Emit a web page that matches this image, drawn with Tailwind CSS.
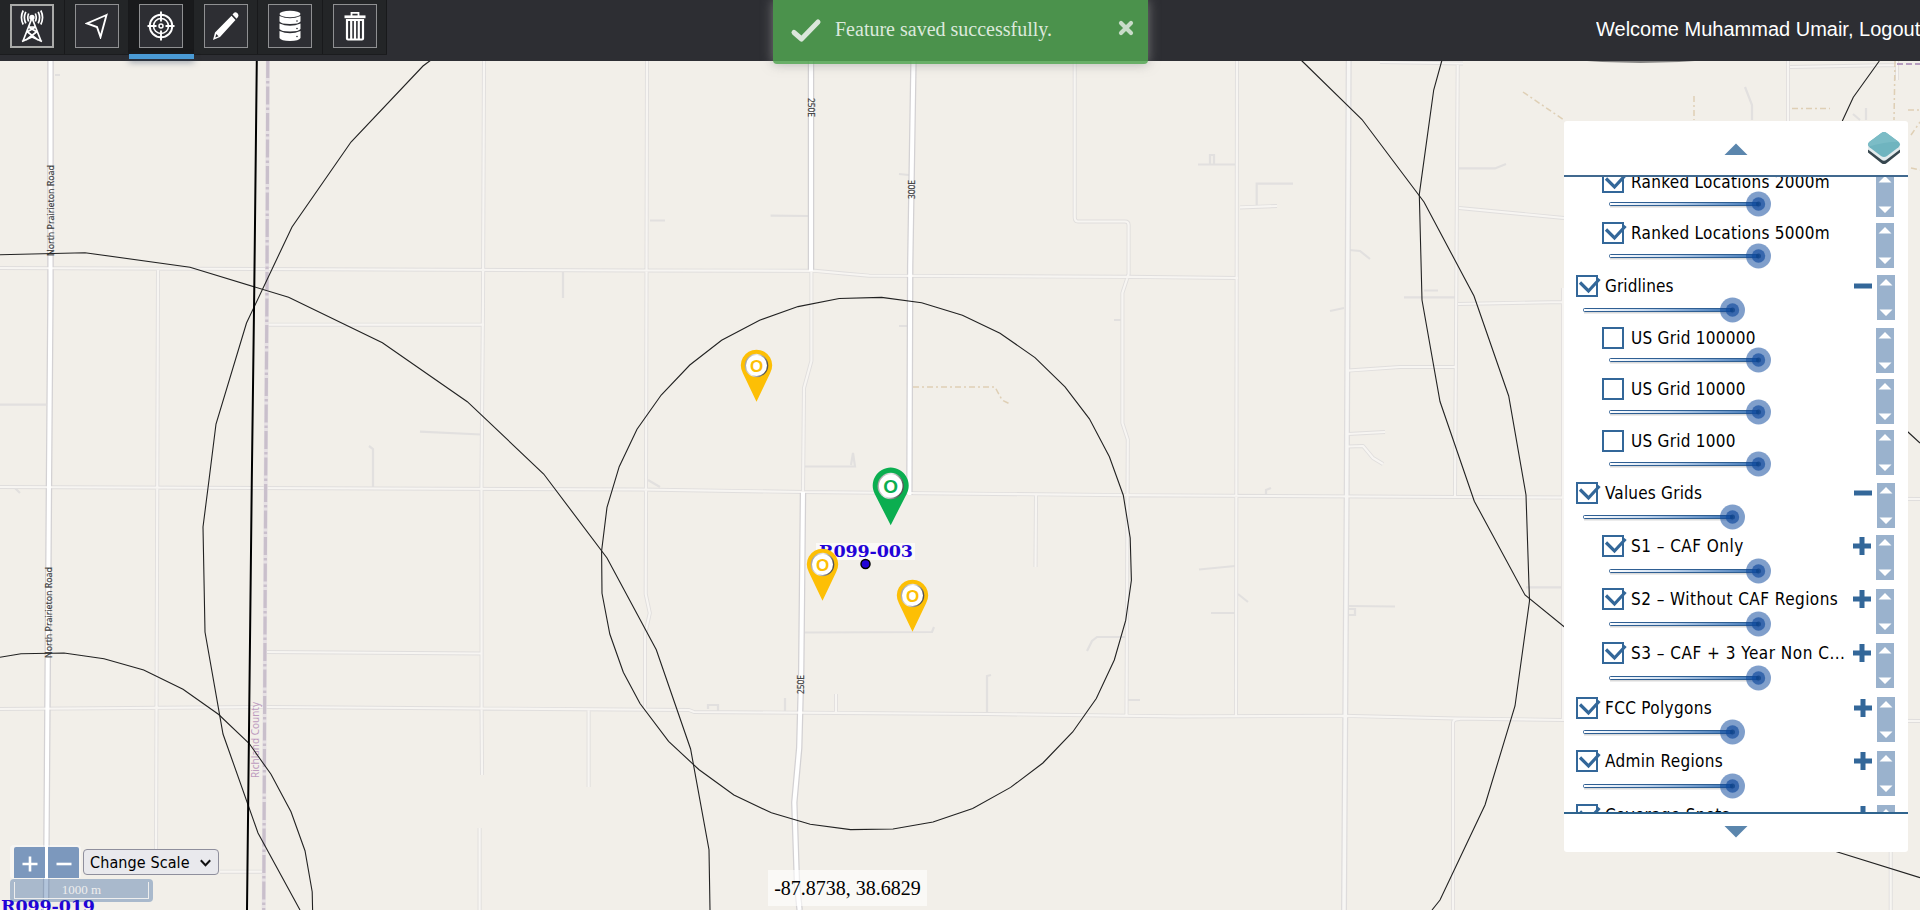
<!DOCTYPE html>
<html lang="en">
<head>
<meta charset="utf-8">
<title>Map viewer</title>
<script src="https://cdn.jsdelivr.net/npm/@tailwindcss/browser@4"></script>
</head>
<body class="relative h-[910px] w-[1920px] overflow-hidden bg-[#f2efe9] font-['Liberation_Sans',sans-serif]">

<!-- map canvas -->
<svg class="absolute inset-0" width="1920" height="910" viewBox="0 0 1920 910" fill="none">
  <defs>
    <g id="minor">
      <path d="M484 60L483 300L481.500 480L481.600 710L482 775M479.600 828V910M158 270L156 858M0 268L640 270.500L815 270.800L844 273.500L869 275.700L1126 276.800L1238 278M0 487L640 489.500L803 492L1126 495.200L1457 497L1920 499M0 709L268 707L480 708.500L689 710L694 712L987 714L1179 716.400L1343 715.800L1457 718.500L1564 720L1920 721M267 324.700H484M267 652L482 653.500M588.600 710V787M220 871.700H264M647 60L646 490L645.700 594L649.800 613L645 634.500V710M811.400 271V361L804 388L803 492M1074.700 60V217Q1074.700 221.500 1078 221.500H1125Q1128.600 221.500 1128.600 225V274L1122.400 293V423L1127.800 439.500L1126.500 714.700M1237 60L1236 716M1457.700 65L1455 496M1380 62L1463 63.500M1453 910V723Q1453 719 1460 719M1348 370.600L1400 367H1455M1459 208L1564 218M1458 304L1564 302M1563 288V720M1788 61V121M1790 67L1897 65M1897 61V80M1890.700 852V910M1240 207.400L1277 206M1348 434L1385 432M1348 446.500L1363 446L1373 458L1383 464M1036 495L1035.500 567M836 694V713"/>
    </g>
    <g id="mid"><path d="M1348.700 60L1346.700 493.600L1344 910"/></g>
    <g id="major"><path d="M50.500 60L50.500 290L49 480L46 910M811 60V271M913.500 60L910.200 266L909.400 495M803 492L801.200 672.500L799.200 748L794.300 802.500L797 884L799.600 910"/></g>
    <linearGradient id="disc" x1="0" y1="0" x2="1" y2="0.300"><stop offset="0" stop-color="#8a8a8a"/><stop offset="0.500" stop-color="#ededed"/><stop offset="1" stop-color="#555"/></linearGradient>
  </defs>
  <!-- driveways and tracks -->
  <path stroke="#e2e0df" stroke-width="2.200" d="M0 404.700H46M420 431.700L481 434.500M369 446L373 449V487M563 272V298M805 466.500H855L853 453L851 465M804.500 632.500L932 632L934 627M987 713V676L991 675M785 698V712M1087 651L1092 641L1097 637H1125M770.600 215.600L808 216M650 220.500H665M899 174L909 175M899 326H909M1199 569.500L1235 566M1211 613H1235M1238 594L1248 602M648 480L660 487M1198 164.500H1235M1210 164V155H1214V164M1256.700 205V183.600H1293M1349 250L1360 251L1370 259M1330 311L1344 308M1404 297.400H1455M1424 290.500H1438M1459 168.400H1495L1506 164M1349 606L1395 606.500M1345 609L1355 609V615H1345M1526 587.400H1564M1266 495V490L1271 488M1114 320H1122M708 709V705H718V711M1127 700H1140M1745 87L1752 105V120M1853 114L1860 120M1866 108V120M0 487L14 487L20 493M55 75H60"/>
  <g stroke-linejoin="round">
    <use href="#minor" stroke="#e0dedd" stroke-width="4"/>
    <use href="#mid" stroke="#dedcdc" stroke-width="6"/>
    <use href="#major" stroke="#d3d1d3" stroke-width="6.500"/>
    <use href="#minor" stroke="#f7f5f2" stroke-width="2.200"/>
    <use href="#mid" stroke="#f7f6f4" stroke-width="3.500"/>
    <use href="#major" stroke="#fff" stroke-width="4"/>
  </g>
  <path stroke="#d9c7a8" stroke-opacity=".8" stroke-width="1.500" stroke-dasharray="6 3 2 3" d="M913 387H995L1002 400L1010 404M1523 92L1564 120M1694 96V120M1792 108.500H1830M1895 61L1894 120M1908 110H1920M1911 135L1920 122M1911 168L1920 170"/>
  <path stroke="#b79ec0" stroke-width="2" stroke-dasharray="6 3" d="M1897 64H1920"/>
  <path stroke="#e6e0e4" stroke-width="4" d="M267.800 60L267 287L265.700 480L263.700 910"/>
  <path stroke="#c9bfcb" stroke-width="3.200" stroke-dasharray="18 3 2.500 3" d="M267.800 60L267 287L265.700 480L263.700 910"/>
  <path fill="#555" fill-opacity=".7" d="M1572 60Q1640 66 1710 60Z"/>
  <!-- road and county names -->
  <g font-family="Noto Sans, sans-serif" font-size="9" fill="#3c3c3c" stroke="#3c3c3c" stroke-width=".15">
    <text transform="translate(53.500 256) rotate(-90)" textLength="91" lengthAdjust="spacingAndGlyphs">North Prairieton Road</text>
    <text transform="translate(51.500 658) rotate(-90)" textLength="91" lengthAdjust="spacingAndGlyphs">North Prairieton Road</text>
    <text transform="translate(807.500 98) rotate(90)" textLength="19" lengthAdjust="spacingAndGlyphs">250E</text>
    <text transform="translate(914.500 199) rotate(-90)" textLength="19" lengthAdjust="spacingAndGlyphs">300E</text>
    <text transform="translate(804 694) rotate(-90)" textLength="19" lengthAdjust="spacingAndGlyphs">250E</text>
    <text transform="translate(258.500 778) rotate(-90)" textLength="76" font-size="10" fill="#bd9bbf" stroke="none">Richland County</text>
  </g>
  <!-- coverage outlines -->
  <g stroke="#222" stroke-width="1.100">
    <path d="M431 60L423 66L351 142L292 227L246.500 323L216 424L209 480L203 527L205 632L223 734L258 833L300 910M1301 60L1362 119.500L1424 202L1474 296L1508.700 396L1526 495L1529.500 601L1515 706L1485 805L1440 900L1432 910"/>
    <path d="M0 254.700L85 252.700L190 267.300L288.600 297.300L382.400 342.700L467.300 401.700L543.700 474L607 558L656.300 649.700L690.600 749L709 849.700L710 910"/>
    <path d="M0 657.300L21 653.700L64 653L104 658.700L143.700 670L183 689.300L218.400 714.300L249 743.300L271 774.300L291 811.700L305 850.700L312.200 891.700L312.600 910"/>
    <path d="M881.600 297.400L921.600 302.800L962.400 315.300L1000 333.200L1035 357.600L1065 386.800L1089.400 418.800L1109.400 456.700L1123.300 495.200L1130.200 538L1131.400 580.300L1125.700 620.400L1114.300 660L1096.300 698.500L1072.700 732L1042.900 763L1010.600 787.400L972.700 808.500L933 822L893 829L850.600 829.600L810.200 824.200L771.400 812.800L733.900 795L698.800 769.500L668.600 741.300L640 703.500L623.300 672.300L609.800 634L602 593.300L601.600 551L607 507.300L619.200 466.700L637 429.300L661.200 395L689.800 365L721.600 340.200L759.600 320.200L798 306.600L839.200 298.500Z"/>
    <path d="M1442 60L1433.700 90L1419.300 194.400L1422 300L1440 401.500L1474.300 501.200L1525 595L1605 660L1700 790L1836.700 851.700L1920 877.700M1879.300 61L1853.300 97.300L1842.300 121M1900 422L1908 432L1920 443"/>
  </g>
  <path stroke="#000" stroke-width="2" d="M256.800 60L254.300 287L251.800 480L247 910"/>
  <!-- site labels -->
  <rect x="816" y="543" width="99" height="17" fill="#fff" fill-opacity=".65"/>
  <g font-family="DejaVu Serif, serif" font-weight="700" font-size="17.500" fill="#2203d8">
    <text x="819" y="557" textLength="94">R099-003</text>
    <text x="1" y="912" textLength="94">R099-019</text>
  </g>
  <circle cx="865.500" cy="564" r="4.500" fill="#2203d8" stroke="#000" stroke-width="1.500"/>
  <!-- pins -->
  <g font-family="Liberation Sans, sans-serif" font-weight="700" font-size="17" text-anchor="middle">
    <g transform="translate(756.500 365)" fill="#fdbf05"><path d="M0 36.700L-13.600 8.200A15.700 15.700 0 1 1 13.600 8.200Z"/><circle cy=".5" r="11.800" fill="url(#disc)"/><circle cy=".5" r="10.500" fill="#fff"/><text y="6.600">O</text></g>
    <g transform="translate(822.500 564)" fill="#fdbf05"><path d="M0 36.700L-13.600 8.200A15.700 15.700 0 1 1 13.600 8.200Z"/><circle cy=".5" r="11.800" fill="url(#disc)"/><circle cy=".5" r="10.500" fill="#fff"/><text y="6.600">O</text></g>
    <g transform="translate(912.500 595)" fill="#fdbf05"><path d="M0 36.700L-13.600 8.200A15.700 15.700 0 1 1 13.600 8.200Z"/><circle cy=".5" r="11.800" fill="url(#disc)"/><circle cy=".5" r="10.500" fill="#fff"/><text y="6.600">O</text></g>
    <g transform="translate(890.700 485.500)" fill="#0bae50"><path d="M0 39.800L-15.800 8.700A18 18 0 1 1 15.800 8.700Z"/><circle cy=".5" r="13.200" fill="url(#disc)"/><circle cy=".5" r="11.800" fill="#fff"/><text y="7.200" font-size="19">O</text></g>
  </g>
</svg>

<!-- top bar -->
<header class="absolute inset-x-0 top-0 flex h-[61px] items-start justify-between bg-[#2d2e33]">
  <nav class="flex h-[55px] border-b border-[#1b1c1e] bg-[#232527]">
    <button class="flex w-[65px] items-start border-r border-[#18191b] pt-1 pl-[10px]">
      <span class="flex size-11 items-center justify-center border-2 border-[#a9aaa8] bg-[#2d2e33]">
        <svg width="24" height="34" viewBox="0 0 24 34" fill="none" stroke="#fff" stroke-width="1.700"><path d="M12 9L3 32M12 9L21 32M8.500 18L15.500 18M7 22.500L18 31M17 22.500L6 31M8.500 18L17 23M15.500 18L7 23M2 32.500L12 28L22 32.500"/><circle cx="12" cy="8.500" r="1.800" fill="#fff"/><path d="M8.700 4.500Q6.800 8.500 8.700 12.500M15.300 4.500Q17.200 8.500 15.300 12.500M5.800 2.800Q3 8.500 5.800 14.300M18.200 2.800Q21 8.500 18.200 14.300M3.200 1.500Q-.3 8.500 3.200 15.500M20.800 1.500Q24.300 8.500 20.800 15.500"/></svg>
      </span>
    </button>
    <button class="flex w-16 items-start border-r border-[#18191b] pt-1 pl-[10px]">
      <span class="flex size-11 items-center justify-center border border-[#8f9092] bg-[#2d2e33]">
        <svg width="24" height="26" viewBox="0 0 24 26" fill="none" stroke="#fff" stroke-width="1.900"><path d="M21.500 2L2 10.500L12 14L15.500 24Z"/></svg>
      </span>
    </button>
    <button class="relative flex w-[65px] items-start border-r border-[#18191b] bg-[#191a1c] pt-1 pl-[10px]">
      <span class="flex size-11 items-center justify-center border border-[#8f9092] bg-[#2d2e33]">
        <svg width="28" height="30" viewBox="0 0 28 30" fill="none" stroke="#fff" stroke-width="1.900"><circle cx="14" cy="15" r="11.300"/><circle cx="14" cy="15" r="7.500" stroke-width="1.600"/><circle cx="14" cy="15" r="2" stroke-width="1.500"/><path d="M14 0.500V10.500M14 19.500V29.500M.5 15H9.500M18.500 15H27.500"/></svg>
      </span>
      <span class="absolute top-[54px] left-0 h-[5px] w-[65px] bg-[#4a9ad4] shadow-[0_3px_6px_rgba(40,60,90,0.500)]"></span>
    </button>
    <button class="flex w-16 items-start border-r border-[#18191b] pt-1 pl-[10px]">
      <span class="flex size-11 items-center justify-center border border-[#8f9092] bg-[#2d2e33]">
        <svg width="28" height="30" viewBox="0 0 28 30" fill="#fff"><path d="M20.500 3.500L22 1.800Q23.500 .6 25.200 2L26 3Q27 4.500 26 6L24.500 7.800Z"/><path fill-rule="evenodd" d="M19.500 4.700L23.500 9L8 26L1 29L3 21.500ZM4.300 23L3.300 26.500L6.500 25.200Z"/></svg>
      </span>
    </button>
    <button class="flex w-[65px] items-start border-r border-[#18191b] pt-1 pl-[10px]">
      <span class="flex size-11 items-center justify-center border border-[#8f9092] bg-[#2d2e33]">
        <svg width="22" height="32" viewBox="0 0 22 32" fill="#fff"><ellipse cx="11" cy="4" rx="10.500" ry="3.300"/><path d="M.5 6Q11 10.500 21.500 6V11.500Q20 14 11 14Q2 14 .5 11.500ZM.5 13.500Q11 18 21.500 13.500V19Q20 21.500 11 21.500Q2 21.500 .5 19ZM.5 21Q11 25.500 21.500 21V28Q20 31 11 31Q2 31 .5 28Z"/><g fill="#2d2e33"><circle cx="18" cy="11" r=".8"/><circle cx="18" cy="18.500" r=".8"/><circle cx="18" cy="26.500" r=".8"/></g></svg>
      </span>
    </button>
    <button class="flex w-16 items-start border-r border-[#18191b] pt-1 pl-[10px]">
      <span class="flex size-11 items-center justify-center border border-[#8f9092] bg-[#2d2e33]">
        <svg width="22" height="30" viewBox="0 0 22 30" fill="none" stroke="#fff"><path stroke-width="2.800" d="M.5 5.800H21.500"/><path stroke-width="1.800" d="M7.500 5V1.800H14.500V5"/><path stroke-width="2.200" d="M3 9H19V27.500Q19 28.500 18 28.500H4Q3 28.500 3 27.500ZM7.200 9V28M11 9V28M14.800 9V28"/></svg>
      </span>
    </button>
  </nav>
  <p class="mt-[17px] w-[324px] overflow-hidden text-[20px] leading-[24px] whitespace-nowrap text-white">Welcome Muhammad Umair, Logout</p>
</header>

<!-- toast -->
<div class="absolute top-0 left-[773px] flex h-16 w-[375px] items-center rounded-b-[4px] bg-[#51a351]/85 pr-[14px] pl-[17px] shadow-[0_0_12px_rgba(153,153,153,0.700)]">
  <svg class="mt-[-2px] shrink-0" width="32" height="26" viewBox="0 0 32 26" fill="none" stroke="#dbe6db" stroke-width="5" stroke-linecap="round" stroke-linejoin="round"><path d="M4 14.500L11.500 21L28 4"/></svg>
  <span class="mt-[-7px] ml-[13px] grow font-['Liberation_Serif',serif] text-[20px] leading-6 whitespace-nowrap text-[#dce9dc]">Feature saved successfully.</span>
  <svg class="mt-[-8px] shrink-0" width="16" height="16" viewBox="0 0 16 16" stroke="#c9dcc9" stroke-width="4.200" stroke-linecap="round"><path d="M3 3L13 13M13 3L3 13"/></svg>
</div>

<!-- layer panel -->
<aside class="absolute top-[121px] left-[1564px] flex h-[731px] w-[344px] flex-col rounded-[3px] bg-white">
  <div class="flex h-[56px] items-start border-b-2 border-[#41698f]">
    <svg class="mt-[22px] ml-[160px]" width="24" height="12" viewBox="0 0 24 12"><path fill="#5b86ad" d="M.5 12L12 .5L23.500 12Z"/></svg>
    <svg class="mt-[10px] ml-[119px]" width="34" height="34" viewBox="0 0 34 34"><path fill="#37474f" d="M1 18L17 27L33 18V21.500L19.500 32.200Q17 34 14.500 32.200L1 21.500Z"/><path fill="#e3ebed" d="M1 14L17 24L33 14V18.500L19.500 28.800Q17 30.600 14.500 28.800L1 18.500Z"/><path fill="#6fb4bf" d="M14 2.200Q17 0 20 2.200L31.500 10.800Q34.500 13.500 31.500 16.200L20 25Q17 27.200 14 25L2.500 16.200Q-.5 13.500 2.500 10.800Z"/><path fill="#7bbcc6" d="M14 2.200Q17 0 20 2.200L31.500 10.800Q17 11 2 15.500Q0 13.500 2.500 10.800Z"/></svg>
  </div>
  <div id="rows" class="h-[635px] shrink-0 overflow-hidden"></div>
  <div class="flex grow justify-center border-t-2 border-[#2f648e] pt-[12px]">
    <svg width="24" height="12" viewBox="0 0 24 12"><path fill="#5b86ad" d="M.5 0H23.500L12 11.500Z"/></svg>
  </div>
</aside>

<!-- zoom, scale chooser and scale line -->
<div class="absolute top-[845px] left-[10px] flex w-[212px] flex-col">
  <div class="flex h-[34px]">
    <div class="flex gap-[3px] rounded-[4px] bg-white/40 pt-[2px] pr-[2px] pl-1">
      <button class="flex h-[31px] w-[31px] items-center justify-center rounded-tl-[2px] bg-[#7c98bd]"><svg class="mt-[3px]" width="16" height="16" viewBox="0 0 16 16" stroke="#fff" stroke-width="2.600"><path d="M.5 8H15.500M8 .5V15.500"/></svg></button>
      <button class="flex h-[31px] w-[31px] items-center justify-center rounded-tr-[2px] bg-[#7c98bd]"><svg class="mt-[3px]" width="16" height="16" viewBox="0 0 16 16" stroke="#fff" stroke-width="2.600"><path d="M.5 8H15.500"/></svg></button>
    </div>
    <div class="mt-[4px] ml-[2px] flex h-[26px] w-[136px] items-center justify-between rounded-[4px] border border-[#8f8f9d] bg-[#e9e9ed] pt-px pr-[7px] pl-[6px] font-['DejaVu_Sans_Condensed','Noto_Sans',sans-serif] text-[16px] tracking-[0.1px] whitespace-nowrap text-black">Change Scale
      <svg width="11" height="8" viewBox="0 0 11 8" fill="none" stroke="#111" stroke-width="2"><path d="M.8 1.200L5.500 6.200L10.200 1.200"/></svg>
    </div>
  </div>
  <div class="h-[23px] w-[143px] rounded-[4px] bg-[#003c88]/30 px-1 pt-[3px]">
    <div class="h-[17px] border border-t-0 border-[#eee] text-center font-['Liberation_Serif',serif] text-[13px] leading-[15px] text-[#eee]">1000 m</div>
  </div>
</div>

<!-- cursor position -->
<div class="absolute top-[870px] left-[768px] flex h-9 w-[159px] items-center justify-center bg-white/60 font-['Liberation_Serif',serif] text-[20px] text-black">-87.8738, 38.6829</div>

<script>
  // name, indent level, checked, toggle sign, row height, slider centre, spinner offset, letter spacing
  const layers = [
    ['Ranked Locations 2000m', 1, 1, '', 51, 33, 1, .28],
    ['Ranked Locations 5000m', 1, 1, '', 53, 33.5, 1, .28],
    ['Gridlines', 0, 1, '-', 52, 35, 0, .1],
    ['US Grid 100000', 1, 0, '', 51, 33, 1, .26],
    ['US Grid 10000', 1, 0, '', 52, 34, 1, .26],
    ['US Grid 1000', 1, 0, '', 52, 33.5, 0, .26],
    ['Values Grids', 0, 1, '-', 53, 35, 1, .2],
    ['S1 – CAF Only', 1, 1, '+', 53, 35.5, 0, .47],
    ['S2 – Without CAF Regions', 1, 1, '+', 54, 36, 1, .45],
    ['S3 – CAF + 3 Year Non C...', 1, 1, '+', 55, 36, 1, .5],
    ['FCC Polygons', 0, 1, '+', 53, 35, 0, .33],
    ['Admin Regions', 0, 1, '+', 54, 36, 1, .33],
    ['Coverage Spots', 0, 1, '+', 52, 35, 1, .28],
  ];
  const tick = '<svg class="-ml-px shrink-0 overflow-visible" width="24" height="20" viewBox="0 0 24 20" fill="none" stroke="#336799" stroke-width="3.200"><path d="M3 5.500L11.500 14L22.500 2"/></svg>';
  const sign = s => s ? `<svg class="ml-auto shrink-0" width="18" height="18" viewBox="0 0 18 18" stroke="#336799" stroke-width="5"><path d="M0 9H18${s === '+' ? 'M9 0V18' : ''}"/></svg>` : '';
  document.getElementById('rows').innerHTML = `<div class="-mt-[6px]">` + layers.map(([name, level, on, s, h, thumb, spin, gap]) => `
    <div class="flex justify-between ${level ? 'pr-[14px] pl-[38px]' : 'pr-[13px] pl-3'}" style="height:${h}px">
      <div class="flex ${level ? 'w-[269px]' : 'w-[296px]'} flex-col">
        <div class="flex h-[22px] shrink-0 items-center">
          <span class="flex size-[22px] shrink-0 border-2 border-[#336799]">${on ? tick : ''}</span>
          <span class="-mt-px ml-[7px] font-['DejaVu_Sans_Condensed','Noto_Sans',sans-serif] text-[17px] leading-[22px] whitespace-nowrap text-black" style="letter-spacing:${gap}px">${name}</span>${sign(s)}
        </div>
        <svg class="ml-[7px] shrink-0" style="margin-top:${thumb - 22 - 13}px" width="163" height="26" viewBox="0 0 163 26">
          <defs><linearGradient id="track"><stop offset="0" stop-color="#fff"/><stop offset=".4" stop-color="#c5d8ee"/><stop offset="1" stop-color="#3a73b5"/></linearGradient></defs>
          <rect x="1" y="14" width="149" height="2.500" fill="#000" fill-opacity=".15"/>
          <rect x=".5" y="11.500" width="149" height="3" rx="1" fill="url(#track)" stroke="#2f5f93" stroke-width="1"/>
          <circle cx="149.500" cy="13" r="12.500" fill="#104a9c" fill-opacity=".53"/>
          <circle cx="149.500" cy="13" r="6.700" fill="#104a9c" fill-opacity=".65"/>
          <circle cx="149.500" cy="13" r="2.500" fill="#0d4186" fill-opacity=".7"/>
        </svg>
      </div>
      <svg class="shrink-0" style="margin-top:${spin}px" width="18" height="45" viewBox="0 0 18 45"><rect width="18" height="45" fill="#9ab2cd"/><path fill="#fff" d="M2.500 10.500L9 4L15.500 10.500ZM2.500 34.500L9 41L15.500 34.500Z"/></svg>
    </div>`).join('') + '</div>';
</script>
</body>
</html>
